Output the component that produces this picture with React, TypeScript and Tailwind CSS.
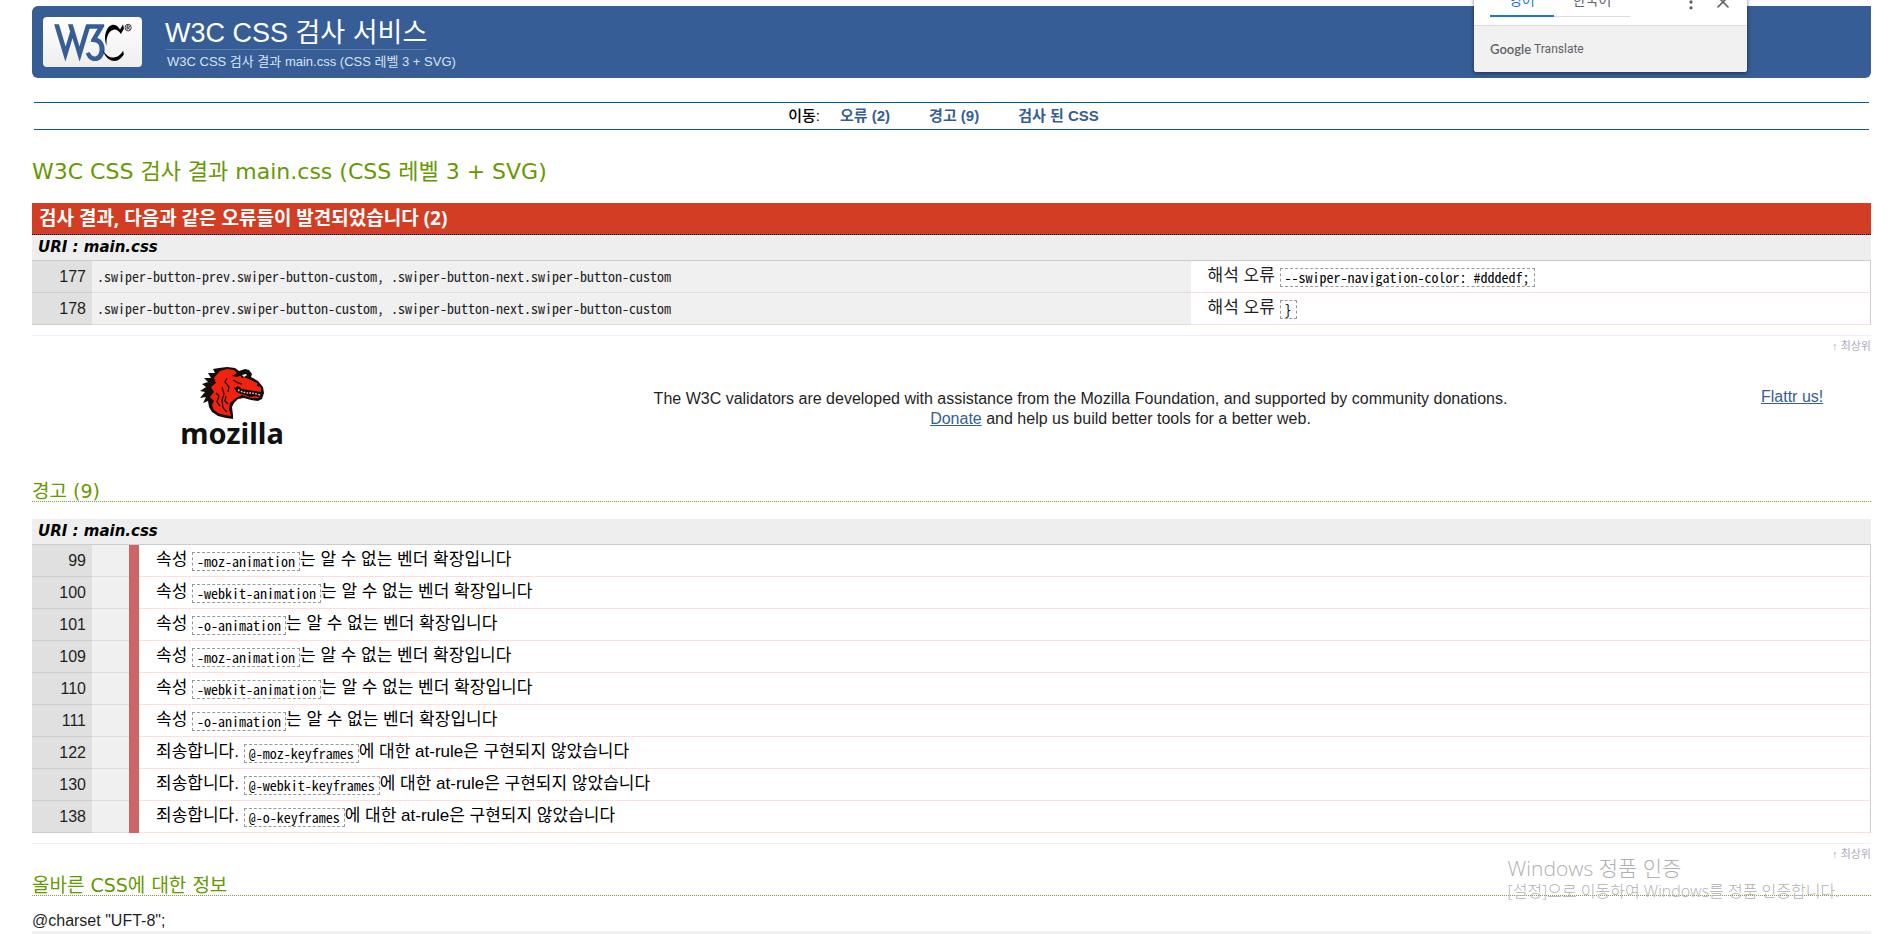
import { MoreVertical, X } from "lucide-react";

type Row = { line: number; before: string; code: string; after?: string; context?: string };

const selector =
  ".swiper-button-prev.swiper-button-custom, .swiper-button-next.swiper-button-custom";

const errors: Row[] = [
  { line: 177, context: selector, before: "해석 오류", code: "--swiper-navigation-color: #dddedf;" },
  { line: 178, context: selector, before: "해석 오류", code: "}" },
];

const vendor = "는 알 수 없는 벤더 확장입니다";
const atRule = "에 대한 at-rule은 구현되지 않았습니다";

const warnings: Row[] = [
  { line: 99, before: "속성", code: "-moz-animation", after: vendor },
  { line: 100, before: "속성", code: "-webkit-animation", after: vendor },
  { line: 101, before: "속성", code: "-o-animation", after: vendor },
  { line: 109, before: "속성", code: "-moz-animation", after: vendor },
  { line: 110, before: "속성", code: "-webkit-animation", after: vendor },
  { line: 111, before: "속성", code: "-o-animation", after: vendor },
  { line: 122, before: "죄송합니다.", code: "@-moz-keyframes", after: atRule },
  { line: 130, before: "죄송합니다.", code: "@-webkit-keyframes", after: atRule },
  { line: 138, before: "죄송합니다.", code: "@-o-keyframes", after: atRule },
];

function W3CLogo() {
  return (
    <svg viewBox="0 0 77 34" preserveAspectRatio="none" className="h-[39px] w-[81px]" aria-hidden="true">
      <path
        transform="translate(-0.2 0) scale(1.1 1)"
        fill="#365d95"
        d="M18.117,1.006l5.759,19.58l5.759-19.58h4.17h11.444v1.946l-5.879,10.128c2.065,0.663,3.627,1.868,4.686,3.615c1.059,1.748,1.589,3.799,1.589,6.155c0,2.914-0.775,5.363-2.324,7.348s-3.555,2.978-6.017,2.978c-1.854,0-3.469-0.589-4.845-1.767c-1.377-1.178-2.396-2.773-3.058-4.786l3.256-1.35c0.477,1.218,1.106,2.178,1.887,2.879c0.781,0.702,1.701,1.052,2.76,1.052c1.112,0,2.052-0.622,2.82-1.866c0.768-1.245,1.152-2.74,1.152-4.489c0-1.933-0.411-3.429-1.231-4.488c-0.954-1.244-2.45-1.867-4.489-1.867h-1.588v-1.906l5.56-9.612h-6.712l-0.382,0.65l-8.163,27.548h-0.397l-5.958-19.937l-5.957,19.937h-0.397L2.032,1.006h4.17l5.759,19.58l3.892-13.185l-1.906-6.395z"
      />
      <g transform="translate(-14.6 0) scale(1.21 1)">
        <path d="M67.921,1.006l0.676,4.107l-2.391,4.575c0,0-0.918-1.941-2.443-3.015c-1.285-0.905-2.122-1.102-3.431-0.832c-1.681,0.347-3.587,2.357-4.419,4.835c-0.995,2.965-1.005,4.4-1.04,5.718c-0.056,2.113,0.277,3.362,0.277,3.362s-1.452-2.686-1.438-6.62c0.009-2.808,0.451-5.354,1.75-7.867c1.143-2.209,2.842-3.535,4.35-3.691c1.559-0.161,2.791,0.59,3.743,1.403c1,0.854,2.01,2.721,2.01,2.721z" />
        <path d="M67.92,24.16c0,0-1.057,1.889-1.715,2.617c-0.659,0.728-1.837,2.01-3.292,2.651s-2.218,0.762-3.656,0.624c-1.437-0.138-2.772-0.97-3.24-1.317s-1.664-1.369-2.34-2.322s-1.733-2.859-1.733-2.859s0.589,1.91,0.958,2.721c0.212,0.467,0.864,1.894,1.789,3.136c0.863,1.159,2.539,3.154,5.086,3.604c2.547,0.451,4.297-0.693,4.73-0.97s1.346-1.042,1.924-1.66c0.603-0.645,1.174-1.468,1.49-1.962c0.231-0.36,0.607-1.092,0.607-1.092z" />
      </g>
      <circle cx="72.4" cy="4" r="2.9" fill="none" stroke="#000" strokeWidth="0.7" />
      <path d="M71.4 5.7V2.4h1.3a.9.9 0 0 1 0 1.8H71.4m1.2 0 1 1.5" fill="none" stroke="#000" strokeWidth="0.7" />
    </svg>
  );
}

function MozillaLogo() {
  return (
    <div className="flex flex-col items-center">
      <svg viewBox="0 0 64 52" className="h-[52px] w-16" aria-hidden="true">
        <path
          fill="#140d0c"
          d="M19 1 27 0 35 1 39 4 45 2 49 3 52 7 51 10 58 14 63 20 64 26 62 32 58 34 51 33 44 31 38 32 34 36 32 40 33 48 33 52 26 51 18 49 12 45 9 40 8 34 3 36 6 30 0 31 5 25 0 24 6 20 2 17 8 15 4 11 11 11 8 6 15 6 13 2Z"
        />
        <path
          fill="#f3220f"
          d="M20 4 27 2 34 3 37 6 32 9 37 10 42 8 46 11 51 13 57 16 61 21 61 25 55 24 48 23 42 22 38 19 34 21 38 26 45 28 50 30 58 29 59 31 51 31 42 28 36 31 30 36 29 42 31 49 25 48 18 46 14 43 12 38 14 34 10 30 14 25 11 20 16 16 14 11Z"
        />
        <path
          d="m22 20 2 7-2 6 1 8 4 4M16 26l3 3-2 6 3 4M27 11l-2 4 4 5-1 5M33 13l5 3 4 1M26 29l-1 5 3 3"
          fill="none"
          stroke="#200d0b"
          strokeWidth="1.3"
        />
        <path d="M39 7c3-3 7-3 10 0l-2 3-5 1Z" fill="#140d0c" />
        <path d="m42 8 4-1 1 1-3 2Z" fill="#fff" />
        <path d="M37 23q6 3 11 3t11 2" fill="none" stroke="#140d0c" strokeWidth="4" />
        <path d="M38 23q6 3 11 3t11 2" fill="none" stroke="#e9d8cf" strokeWidth="1.4" strokeDasharray="1.6 1.4" />
        <path d="M57 18l2 1" stroke="#140d0c" strokeWidth="1.4" />
      </svg>
      <span className="-mt-0.5 font-['Noto_Sans','Open_Sans',sans-serif] text-[29px] leading-8 font-bold text-[#111]">
        mozilla
      </span>
    </div>
  );
}

function Code({ children }: { children: string }) {
  return (
    <code className="inline-block border border-dashed border-[#999] px-1 align-middle font-['Noto_Sans_Mono_CJK_KR','Liberation_Mono',monospace] text-sm leading-[17px] text-black">
      {children}
    </code>
  );
}

function UriCaption() {
  return (
    <h4 className="border-b border-[#ccc] bg-[#eee] px-1.5 font-['DejaVu_Sans','Noto_Sans_CJK_KR',sans-serif] text-[15px] leading-[25px] font-bold text-black italic">
      URI : main.css
    </h4>
  );
}

function TopLink() {
  return (
    <p className="mt-2.5 border-t border-[#eef] text-right text-[11px] leading-5">
      <a href="#top" className="text-[#aab]">
        ↑ 최상위
      </a>
    </p>
  );
}

function SectionTitle({ id, children }: { id: string; children: string }) {
  return (
    <h3
      id={id}
      className="border-b border-dotted border-[#8a9a3a] font-['DejaVu_Sans','Noto_Sans_CJK_KR',sans-serif] text-[19px] leading-5 text-[#690]"
    >
      {children}
    </h3>
  );
}

function TranslatePopup() {
  return (
    <div className="absolute -top-6 right-[149px] w-[273px] overflow-hidden rounded-[3px] bg-white font-['Noto_Sans_CJK_KR',sans-serif] shadow-[0_1px_4px_rgba(0,0,0,0.5)]">
      <div className="flex h-[49px] items-start justify-between pr-3.5 pl-4">
        <div className="flex text-sm">
          <button className="h-[41px] w-16 border-b-2 border-[#1a73e8] pt-1.5 text-[#1a73e8]">영어</button>
          <button className="h-[41px] w-[76px] border-b border-[#dadce0] pt-1.5 text-[#5f6368]">한국어</button>
        </div>
        <div className="flex gap-3 pt-4 text-[#5f6368]">
          <button aria-label="옵션">
            <MoreVertical className="size-5" />
          </button>
          <button aria-label="닫기">
            <X className="size-5" />
          </button>
        </div>
      </div>
      <p className="flex h-[47px] items-center gap-[3px] border-t border-[#dadce0] bg-[#f1f1f1] px-4 text-[13px] text-[#5f6368]">
        <span className="font-['Lato',sans-serif] font-semibold">Google</span>
        <span className="font-['Roboto',sans-serif] text-xs">Translate</span>
      </p>
    </div>
  );
}

export default function App() {
  return (
    <div
      id="top"
      className="relative h-screen overflow-hidden bg-white font-['Liberation_Sans','Noto_Sans_CJK_KR',sans-serif] text-base leading-5 text-[#1f1f1f]"
    >
      <div className="mr-[25px] ml-8 pt-1.5">
        <header className="flex h-[72px] rounded-md rounded-tr-none bg-[#365d95] pt-[11px] pl-[11px]">
          <a
            href="#top"
            aria-label="W3C"
            className="flex h-[50px] w-[99px] items-center justify-center rounded bg-linear-to-b from-white to-[#eee]"
          >
            <W3CLogo />
          </a>
          <div className="ml-[23px]">
            <h1 className="w-fit border-b border-[#5a7cab] text-[27px] leading-8 text-white">
              <a href="#top">W3C CSS 검사 서비스</a>
            </h1>
            <p className="pl-0.5 text-[13px] leading-6 text-[#d6e2f5]">
              W3C CSS 검사 결과 main.css (CSS 레벨 3 + SVG)
            </p>
          </div>
        </header>

        <nav className="mx-0.5 mt-6 flex h-7 items-center justify-center border-y border-[#005a9c] pr-4 text-[15px] text-black">
          <span className="font-medium">이동:</span>
          <ul className="ml-5 flex gap-[39px] font-bold text-[#365d95]">
            <li><a href="#errors">오류 (2)</a></li>
            <li><a href="#warnings">경고 (9)</a></li>
            <li><a href="#css">검사 된 CSS</a></li>
          </ul>
        </nav>

        <h2 className="mt-7 font-['DejaVu_Sans','Noto_Sans_CJK_KR',sans-serif] text-[22px] leading-7 text-[#690]">
          W3C CSS 검사 결과 main.css (CSS 레벨 3 + SVG)
        </h2>

        <section className="mt-[17px]">
          <h3
            id="errors"
            className="border-b border-dotted border-black bg-[#d23d24] px-[7px] font-['Noto_Sans','Noto_Sans_CJK_KR',sans-serif] text-[19px] leading-[31px] font-bold text-white"
          >
            검사 결과, 다음과 같은 오류들이 발견되었습니다 (2)
          </h3>
          <UriCaption />
          <table className="w-full table-fixed border-separate border-spacing-0">
            <colgroup>
              <col className="w-[60px]" />
              <col />
              <col className="w-[37%]" />
            </colgroup>
            <tbody>
              {errors.map((row) => (
                <tr key={row.line} className="h-8">
                  <td className="border-b border-[#ccc] bg-[#e0e0e0] pr-1.5 text-right">{row.line}</td>
                  <td className="truncate border-b border-[#ddd] bg-[#f0f0f0] pb-0.5 pl-[5px] font-['Noto_Sans_Mono_CJK_KR','Liberation_Mono',monospace] text-sm">
                    {row.context}
                  </td>
                  <td className="border-r border-b border-r-[#ccc] border-b-[#fdd] pl-[17px] text-[17px] leading-5">
                    {row.before} <Code>{row.code}</Code>
                  </td>
                </tr>
              ))}
            </tbody>
          </table>
          <TopLink />
        </section>

        <section className="mt-[11px] flex h-[88px] items-start">
          <div className="flex w-[400px] justify-center">
            <MozillaLogo />
          </div>
          <p className="mt-[22px] flex-1 text-center">
            The W3C validators are developed with assistance from the Mozilla Foundation, and supported by community
            donations.
            <span className="block pl-20">
              <a href="#donate" className="text-[#365d95] underline">
                Donate
              </a>{" "}
              and help us build better tools for a better web.
            </span>
          </p>
          <p className="mt-5 w-[142px] pl-8">
            <a href="#flattr" className="text-[#365d95] underline">
              Flattr us!
            </a>
          </p>
        </section>

        <section className="mt-[26px]">
          <SectionTitle id="warnings">경고 (9)</SectionTitle>
          <div className="mt-[17px]">
            <UriCaption />
            <table className="w-full table-fixed border-separate border-spacing-0">
              <colgroup>
                <col className="w-[60px]" />
                <col className="w-[37px]" />
                <col className="w-2.5" />
                <col />
              </colgroup>
              <tbody>
                {warnings.map((row) => (
                  <tr key={row.line} className="h-8 text-black">
                    <td className="border-b border-[#ccc] bg-[#e0e0e0] pr-1.5 text-right text-[#1f1f1f]">{row.line}</td>
                    <td className="border-b border-[#ddd] bg-[#f0f0f0]" />
                    <td className="border-b border-[#c66] bg-[#c66]" />
                    <td className="border-r border-b border-r-[#ccc] border-b-[#fdd] pl-[17px] text-[17px] leading-5">
                      {row.before} <Code>{row.code}</Code>
                      {row.after}
                    </td>
                  </tr>
                ))}
              </tbody>
            </table>
          </div>
          <TopLink />
        </section>

        <section className="mt-[11px]">
          <SectionTitle id="css">올바른 CSS에 대한 정보</SectionTitle>
          <p className="mt-[15px]">@charset "UFT-8";</p>
          <div className="h-8 bg-[#f0f0f0]" />
        </section>
      </div>

      <TranslatePopup />

      <div className="pointer-events-none absolute right-[57px] bottom-[33px] font-['Open_Sans','Noto_Sans_CJK_KR',sans-serif] font-light text-[#b0b0b0]">
        <p className="text-[21px] leading-[26px]">Windows 정품 인증</p>
        <p className="text-base leading-5">[설정]으로 이동하여 Windows를 정품 인증합니다.</p>
      </div>
    </div>
  );
}
